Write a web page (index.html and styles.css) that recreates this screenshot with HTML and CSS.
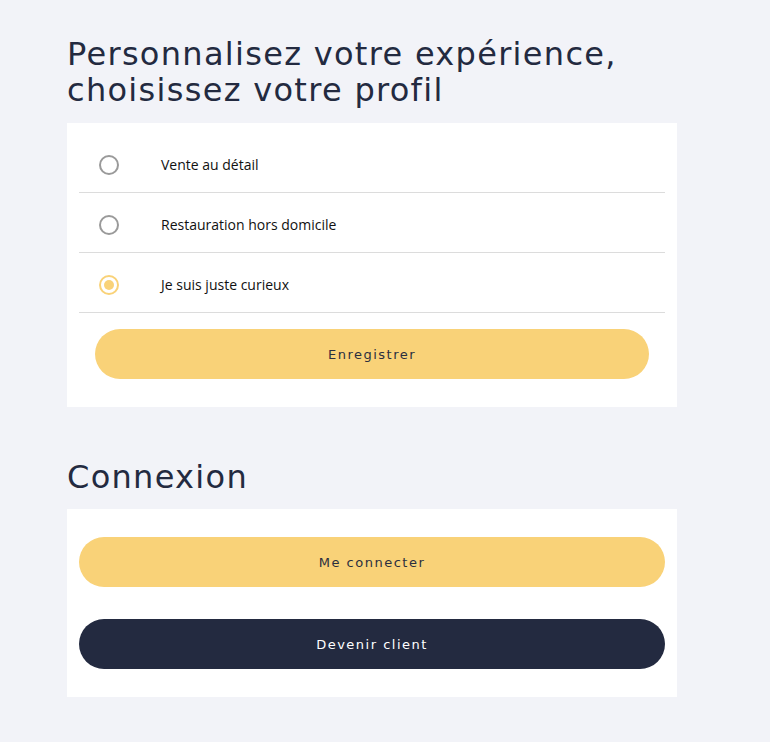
FILE: index.html
```html
<!DOCTYPE html>
<html lang="fr">
<head>
  <meta charset="UTF-8" />
  <meta name="viewport" content="width=device-width, initial-scale=1.0" />
  <title>Profil</title>
  <link rel="stylesheet" href="styles.css">
</head>
<body>
  <main class="page">
    <h2 class="title">Personnalisez votre expérience, choisissez votre profil</h2>
    <form class="card profile-card">
      <label class="option">
        <input type="radio" name="profile">
        <span class="radio"></span>
        <span class="option-text">Vente au détail</span>
      </label>
      <label class="option">
        <input type="radio" name="profile">
        <span class="radio"></span>
        <span class="option-text">Restauration hors domicile</span>
      </label>
      <label class="option">
        <input type="radio" name="profile" checked>
        <span class="radio"></span>
        <span class="option-text">Je suis juste curieux</span>
      </label>
      <button type="submit" class="btn btn-yellow btn-save">Enregistrer</button>
    </form>

    <h2 class="title title-login">Connexion</h2>
    <div class="card login-card">
      <button class="btn btn-yellow">Me connecter</button>
      <button class="btn btn-dark">Devenir client</button>
    </div>
  </main>
</body>
</html>
```
FILE: styles.css
```css
body {
  margin: 0;
  background-color: #f2f3f8;
  color: #232a40;
  font-family: "DejaVu Sans", sans-serif;
}
.page {
  width: 610px;
  margin-left: 67px;
  padding-top: 36px;
}
.title {
  margin: 0 0 15px;
  font-family: "DejaVu Sans", sans-serif;
  font-weight: 400;
  font-size: 32px;
  line-height: 36px;
  letter-spacing: 1.3px;
  color: #232a40;
  width: 600px;
}
.title-login {
  margin-top: 52px;
  margin-bottom: 14px;
}
.card {
  background-color: #fff;
  box-sizing: border-box;
}
.profile-card {
  padding: 10px 12px 28px;
  display: flex;
  flex-direction: column;
}
.option {
  display: flex;
  align-items: center;
  height: 60px;
  padding-left: 20px;
  padding-top: 4px;
  border-bottom: 1px solid #dcdcdc;
  box-sizing: border-box;
  cursor: pointer;
}
.option input {
  display: none;
}
.radio {
  width: 20px;
  height: 20px;
  border: 2px solid #9a9a9a;
  border-radius: 50%;
  box-sizing: border-box;
  margin-right: 42px;
  display: flex;
  align-items: center;
  justify-content: center;
}
.option input:checked + .radio {
  border-color: #f9d278;
}
.option input:checked + .radio::after {
  content: "";
  width: 10px;
  height: 10px;
  border-radius: 50%;
  background-color: #f9d278;
}
.option-text {
  font-family: "Open Sans", sans-serif;
  font-size: 14px;
  color: #111;
}
.btn {
  display: block;
  height: 50px;
  border: none;
  border-radius: 25px;
  font-family: "DejaVu Sans", sans-serif;
  font-size: 13px;
  letter-spacing: 1.5px;
  cursor: pointer;
}
.btn-yellow {
  background-color: #f9d278;
  color: #2b2f3f;
}
.btn-dark {
  background-color: #232a40;
  color: #fff;
}
.btn-save {
  margin: 16px 16px 0;
}
.login-card {
  padding: 28px 12px;
  display: flex;
  flex-direction: column;
  gap: 32px;
}
.login-card .btn {
  width: 100%;
}
```
